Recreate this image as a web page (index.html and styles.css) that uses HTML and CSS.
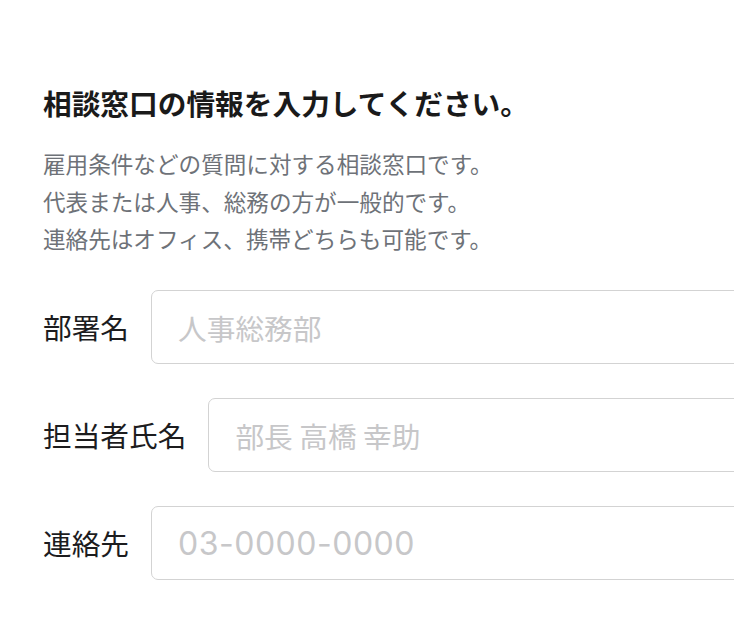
FILE: index.html
```html
<!DOCTYPE html>
<html lang="ja">
<head>
<meta charset="utf-8">
<title>相談窓口の情報</title>
<link rel="stylesheet" href="styles.css">
</head>
<body>
<main class="page">
  <h1 class="title">相談窓口の情報を入力してください。</h1>
  <p class="lead">雇用条件などの質問に対する相談窓口です。<br>代表または人事、総務の方が一般的です。<br>連絡先はオフィス、携帯どちらも可能です。</p>
  <div class="fields">
    <div class="field">
      <label class="field-label" for="dept">部署名</label>
      <input class="field-input" id="dept" type="text" placeholder="人事総務部">
    </div>
    <div class="field">
      <label class="field-label" for="person">担当者氏名</label>
      <input class="field-input" id="person" type="text" placeholder="部長 高橋 幸助">
    </div>
    <div class="field">
      <label class="field-label" for="tel">連絡先</label>
      <input class="field-input field-input--tel" id="tel" type="tel" placeholder="03-0000-0000">
    </div>
  </div>
</main>
</body>
</html>
```

FILE: styles.css
```css
html, body {
  margin: 0;
  padding: 0;
  background: #ffffff;
  overflow: hidden;
}

body {
  font-family: "Noto Sans CJK JP", "Noto Sans", sans-serif;
  color: #1c1c1e;
}

.page {
  padding: 86px 0 0 43px;
}

.title {
  margin: 0;
  font-size: 28.7px;
  line-height: 34px;
  font-weight: 700;
  color: #1a1a1a;
  white-space: nowrap;
}

.lead {
  margin: 25px 0 0;
  font-size: 22.6px;
  line-height: 37.7px;
  color: #6e7278;
  white-space: nowrap;
}

.fields {
  margin-top: 32px;
  display: flex;
  flex-direction: column;
  gap: 34px;
}

.field {
  display: flex;
  align-items: center;
  gap: 22px;
}

.field-label {
  flex: 0 0 auto;
  font-size: 28.7px;
  line-height: 40px;
  font-weight: 400;
  color: #1c1c1e;
  white-space: nowrap;
}

.field-input {
  flex: 0 0 auto;
  box-sizing: border-box;
  width: 640px;
  height: 74px;
  margin: 0;
  padding: 0 26px;
  border: 1.5px solid #d3d3d3;
  border-radius: 7px;
  background: #ffffff;
  font-family: "Noto Sans CJK JP", "Noto Sans", sans-serif;
  font-size: 28.7px;
  color: #1c1c1e;
  outline: none;
}

.field-input::placeholder {
  color: #c7c7c9;
  opacity: 1;
}

.field-input--tel {
  font-family: Inter, "Noto Sans", sans-serif;
  font-size: 32px;
  letter-spacing: 0.5px;
}
```
